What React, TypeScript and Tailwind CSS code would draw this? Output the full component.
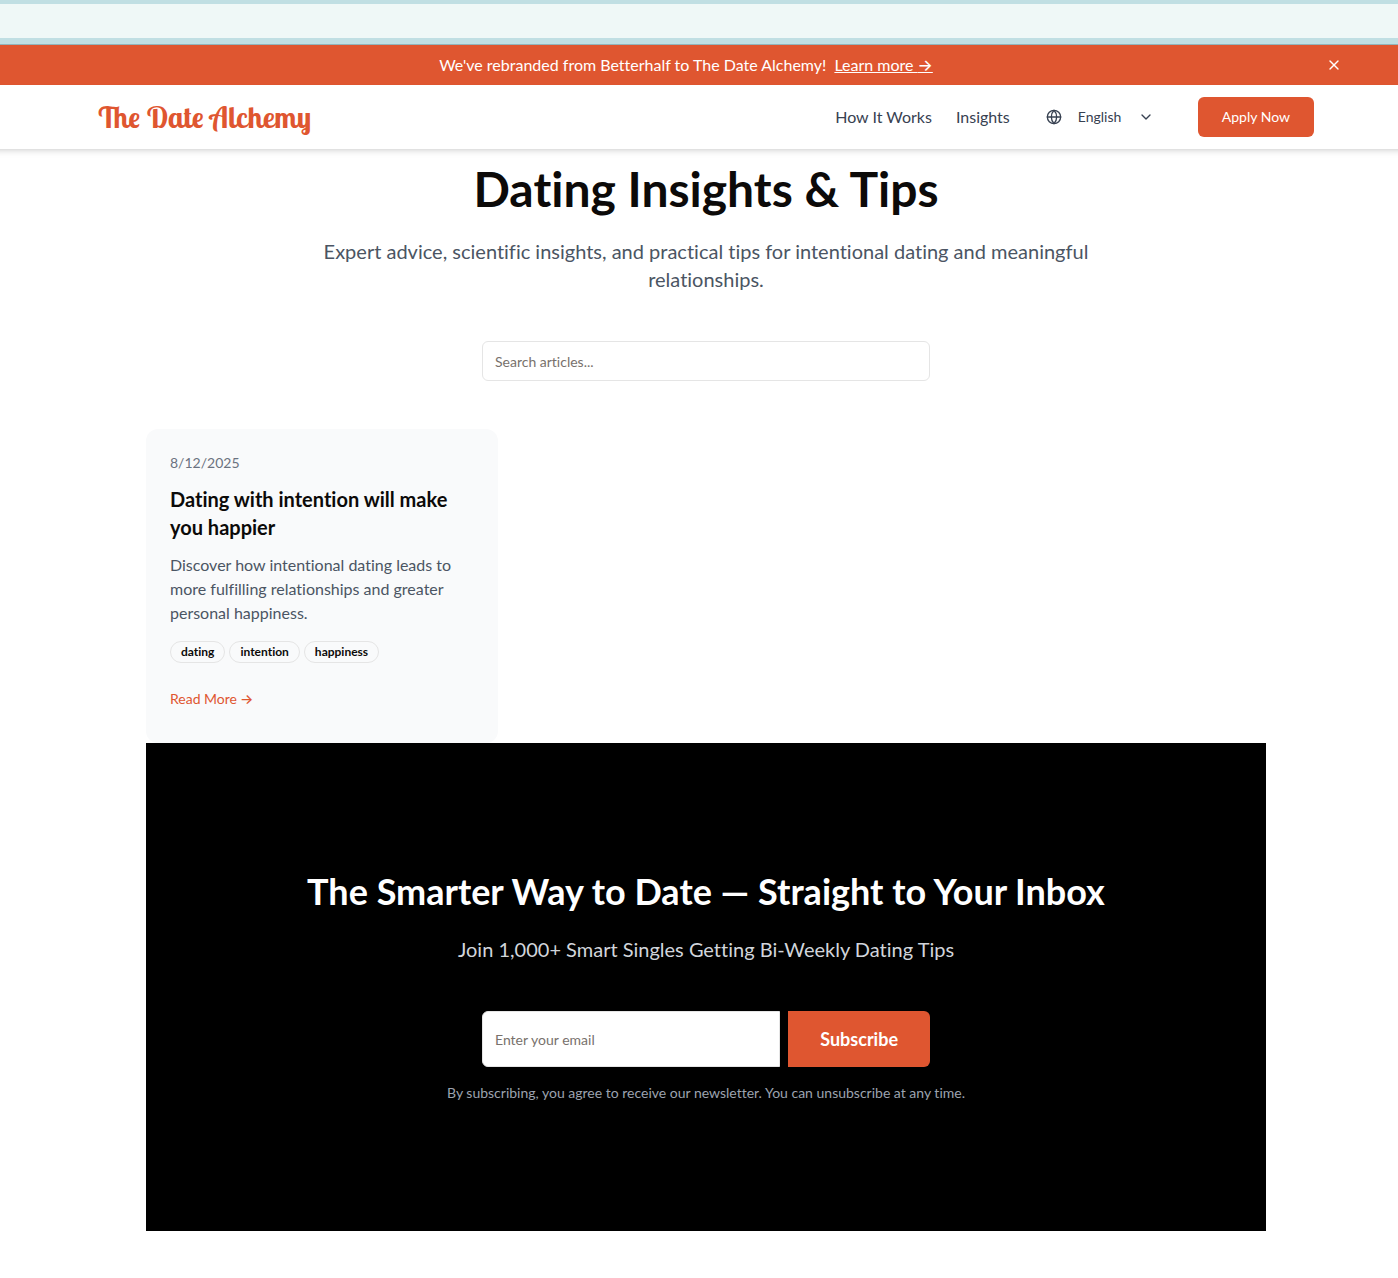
import { ChevronDown, Globe, X } from "lucide-react";

const tags = ["dating", "intention", "happiness"];

function Arrow() {
  return <span className="font-['Inter',sans-serif] font-medium">→</span>;
}

function Banner() {
  return (
    <div className="bg-[#df5630] pl-[14px] text-white">
      <div className="mx-auto flex h-10 max-w-7xl items-center">
        <p className="flex flex-1 justify-center gap-2 text-base">
          <span>We've rebranded from Betterhalf to The Date Alchemy!</span>
          <a href="#rebrand" className="underline">
            Learn more <Arrow />
          </a>
        </p>
        <button type="button" aria-label="Dismiss" className="ml-4 p-1">
          <X size={16} strokeWidth={2} />
        </button>
      </div>
    </div>
  );
}

function Header() {
  return (
    <header className="relative -mx-2 bg-white pr-2 pl-[22px] shadow-md">
      <div className="mx-auto flex h-16 max-w-7xl items-center justify-between px-8">
        <a
          href="#home"
          className="font-['Lobster_Two','Lobster','Liberation_Serif',serif] text-[30px] leading-9 font-bold whitespace-nowrap text-[#df5630] [font-variant-ligatures:normal]"
        >
          The Date Alchemy
        </a>
        <nav className="flex items-center gap-6 text-base text-[#374151]">
          <a href="#how">How It Works</a>
          <a href="#insights">Insights</a>
          <div className="flex items-center gap-4 px-3">
            <Globe size={16} aria-hidden="true" />
            <div className="relative flex items-center">
              <select
                aria-label="Language"
                defaultValue="en"
                className="w-[76px] appearance-none bg-transparent text-sm"
              >
                <option value="en">English</option>
              </select>
              <ChevronDown size={16} aria-hidden="true" className="pointer-events-none absolute right-0" />
            </div>
          </div>
          <button type="button" className="ml-2 h-10 rounded-md bg-[#df5630] px-6 text-sm text-white">
            Apply Now
          </button>
        </nav>
      </div>
    </header>
  );
}

function ArticleCard() {
  return (
    <article className="rounded-xl bg-gray-50 p-6">
      <time className="block text-sm text-[#6b7280]">8/12/2025</time>
      <h2 className="mt-3 text-xl leading-7 font-bold">Dating with intention will make you happier</h2>
      <p className="mt-3 text-base text-[#4b5563]">
        Discover how intentional dating leads to more fulfilling relationships and greater personal happiness.
      </p>
      <ul className="mt-4 flex flex-wrap gap-1">
        {tags.map((tag) => (
          <li key={tag} className="rounded-full border border-[#e5e5e5] px-[10px] py-0.5 text-xs leading-4 font-bold">
            {tag}
          </li>
        ))}
      </ul>
      <a href="#article" className="mt-4 flex h-10 items-center gap-[3px] text-sm text-[#df5630]">
        Read More <Arrow />
      </a>
    </article>
  );
}

function Newsletter() {
  return (
    <section className="bg-black px-8 py-32 text-center">
      <h2 className="text-4xl leading-10 font-bold text-white">The Smarter Way to Date — Straight to Your Inbox</h2>
      <p className="mt-6 text-xl leading-7 text-[#d1d5db]">Join 1,000+ Smart Singles Getting Bi-Weekly Dating Tips</p>
      <form className="mx-auto mt-12 flex max-w-md gap-2" onSubmit={(e) => e.preventDefault()}>
        <input
          type="email"
          aria-label="Email"
          placeholder="Enter your email"
          className="h-14 min-w-0 flex-1 rounded-l-md border border-[#e5e5e5] bg-white px-3 text-sm placeholder:text-[#78716c]"
        />
        <button type="submit" className="h-14 rounded-r-md bg-[#df5630] px-8 text-lg font-bold text-white">
          Subscribe
        </button>
      </form>
      <p className="mt-4 text-sm text-[#9ca3af]">
        By subscribing, you agree to receive our newsletter. You can unsubscribe at any time.
      </p>
    </section>
  );
}

export default function App() {
  return (
    <div className="min-h-screen overflow-x-hidden bg-white font-['Lato',sans-serif] text-[#0c0a09] antialiased [font-variant-ligatures:none]">
      <div className="h-[45px] border-t-4 border-[#c0dfe3] bg-[#eff8f7]">
        <div className="mt-[34px] h-[7px] border-b border-[#92b4ba] bg-[#c0dfe3]" />
      </div>
      <Banner />
      <Header />
      <main className="pb-12 pl-[14px]">
        <div className="mx-auto max-w-[1120px]">
          <div className="pt-4 text-center">
            <h1 className="text-5xl leading-none font-bold">Dating Insights &amp; Tips</h1>
            <p className="mx-auto mt-6 max-w-3xl text-xl leading-7 text-[#4b5563]">
              Expert advice, scientific insights, and practical tips for intentional dating and meaningful
              relationships.
            </p>
            <input
              type="search"
              aria-label="Search articles"
              placeholder="Search articles..."
              className="mt-12 h-10 w-full max-w-md rounded-md border border-[#e5e5e5] bg-white px-3 text-sm placeholder:text-[#78716c]"
            />
          </div>
          <div className="mt-12 grid grid-cols-3 gap-8">
            <ArticleCard />
          </div>
          <Newsletter />
        </div>
      </main>
    </div>
  );
}
